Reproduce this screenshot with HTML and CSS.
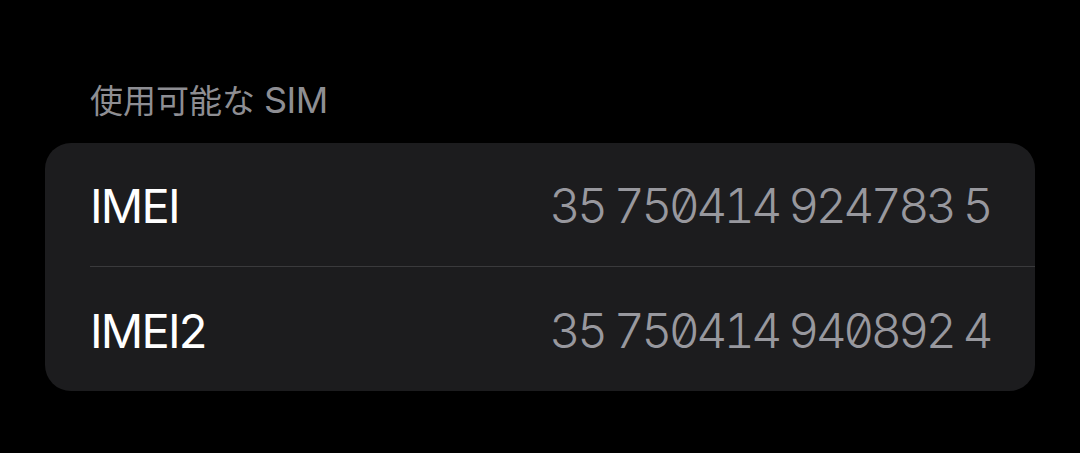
FILE: index.html
```html
<!DOCTYPE html>
<html lang="ja"><head><meta charset="utf-8"><link rel="stylesheet" href="styles.css"></head>
<body>
<main class="page">
  <h2 class="section-title"><span class="jp">使用可能な</span>SIM</h2>
  <section class="card">
    <div class="row">
      <span class="label">IMEI</span>
      <span class="value">35 750414 924783 5</span>
    </div>
    <div class="sep"></div>
    <div class="row">
      <span class="label">IMEI2</span>
      <span class="value">35 750414 940892 4</span>
    </div>
  </section>
</main>
</body></html>
```
FILE: styles.css
```css
html, body { margin: 0; padding: 0; background: #000; }
body { font-family: Inter, "Noto Sans CJK JP", sans-serif; }
.page { padding: 78px 45px 0 45px; }
.section-title {
  margin: 0 0 20px 0;
  padding-left: 45px;
  font-size: 36px;
  line-height: 44px;
  font-weight: 400;
  color: #8e8e93;
  letter-spacing: -0.5px;
}
.jp { font-size: 33px; letter-spacing: 0; margin-right: 9px; }
.card {
  background: #1c1c1e;
  border-radius: 26px;
  display: flex;
  flex-direction: column;
}
.row {
  height: 123px;
  display: flex;
  align-items: center;
  justify-content: space-between;
  padding: 2px 45px 0 45px;
  box-sizing: border-box;
}
.row:last-child { height: 124px; }
.sep { height: 1px; margin-left: 45px; background: #3a3a3c; }
.label {
  color: #fff;
  font-size: 47px;
  letter-spacing: -1.8px;
}
.value {
  color: #98989e;
  font-size: 48px;
  font-weight: 360;
  font-feature-settings: "tnum", "zero";
  letter-spacing: -3.55px;
}
```
